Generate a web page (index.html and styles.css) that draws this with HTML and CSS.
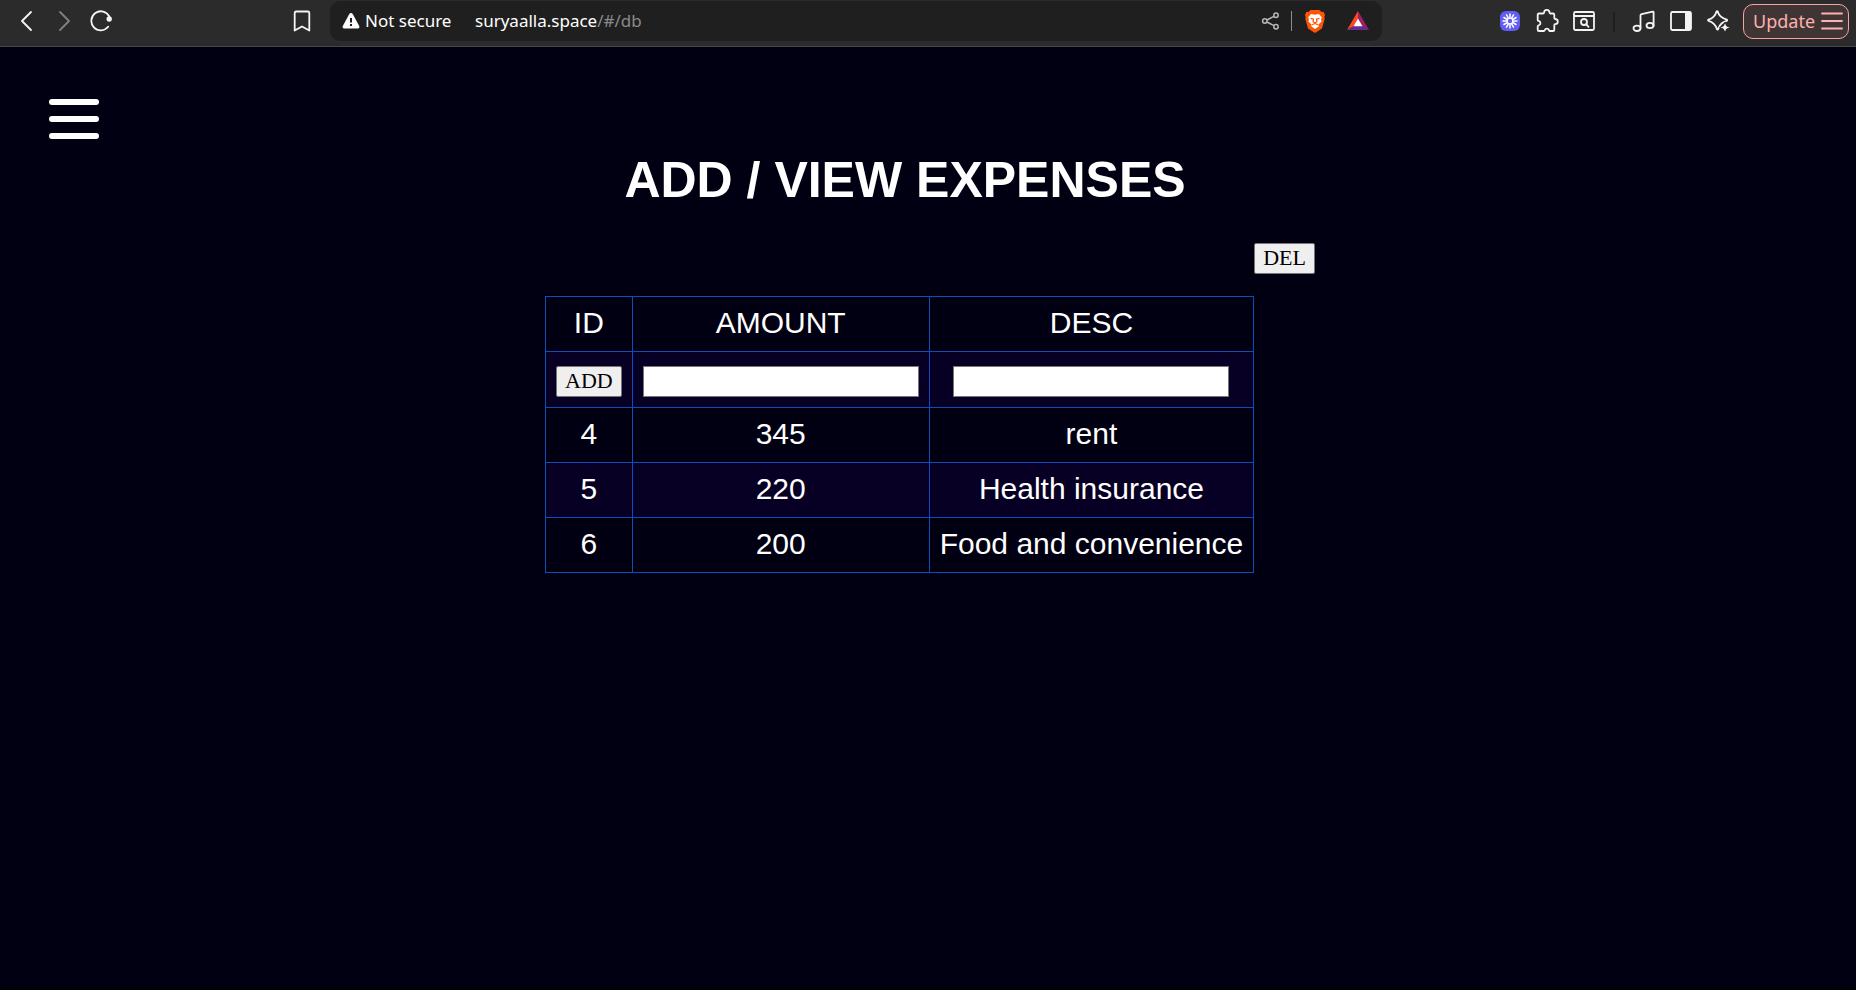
FILE: index.html
```html
<!DOCTYPE html>
<html lang="en">
<head>
<meta charset="utf-8">
<title>Expenses</title>
<link rel="stylesheet" href="styles.css">
</head>
<body>
<header class="toolbar">
  <nav class="nav">
    <button class="icon-btn" aria-label="Back"><svg width="22" height="22" viewBox="0 0 22 22"><path d="M15 2 6 11 15 20" class="line"/></svg></button>
    <button class="icon-btn dim" aria-label="Forward"><svg width="22" height="22" viewBox="0 0 22 22"><path d="M7 2l9 9-9 9" class="line"/></svg></button>
    <button class="icon-btn" aria-label="Reload"><svg width="22" height="22" viewBox="0 0 22 22"><path d="M18.200 16.800A9.500 9.500 0 1 1 19.300 6.500" class="line"/><circle cx="19.200" cy="9" r="2.700" fill="currentColor"/></svg></button>
  </nav>
  <button class="icon-btn bookmark" aria-label="Bookmark"><svg width="22" height="22" viewBox="0 0 22 22"><path d="M5.200 1.500h11.600a1.500 1.500 0 0 1 1.500 1.500v17.500L11 16.500l-7.300 4V3a1.500 1.500 0 0 1 1.500-1.500z" class="line"/></svg></button>
  <div class="address">
    <svg width="18" height="16" viewBox="0 0 18 16"><path d="M9 0c.8 0 1.300.4 1.700 1l6.500 12c.7 1.300-.1 2.500-1.400 2.500H2.200C.9 15.500.1 14.300.8 13L7.300 1C7.700.4 8.200 0 9 0z" fill="#fff"/><path d="M8 5h2v4.500H8zM8 11h2v2H8z" fill="#1f1f1f"/></svg>
    <span class="secure">Not secure</span>
    <span class="url">suryaalla.space<span class="path">/#/db</span></span>
    <div class="address-icons">
      <button class="icon-btn share" aria-label="Share"><svg width="20" height="20" viewBox="0 0 20 20"><g fill="none" stroke="currentColor" stroke-width="1.500"><circle cx="3.800" cy="10" r="2.200"/><circle cx="15" cy="4.300" r="2.200"/><circle cx="15" cy="15.700" r="2.200"/><path d="M6 9l7-3.600M6 11l7 3.600"/></g></svg></button>
      <span class="sep"></span>
      <button class="icon-btn" aria-label="Shields"><svg width="22" height="24" viewBox="0 0 22 24"><path d="M6.500 1h9l2 2 2-.3L21 6l-.7 2.200.4 1.500-2.700 9.800L11 24l-7-4.500L1.300 9.700l.4-1.500L1 6l1.500-3.300 2 .3z" fill="#fb5607"/><path d="M7 5l4 .8L15 5l2.700 3.200-.7 2.600.6 1.700-3.400 3.200.7 1.500-3.900 2.700-3.900-2.700.7-1.500-3.400-3.200.6-1.700-.7-2.600z" fill="#fff"/><path d="M6.500 9.300l3 .8-.4 2.700L11 14l1.900-1.200-.4-2.700 3-.8M8 15.800l3-1.300 3 1.300" fill="none" stroke="#fb5607" stroke-width="1.200"/></svg></button>
      <button class="icon-btn" aria-label="Rewards"><svg width="24" height="22" viewBox="0 0 24 22"><path d="M12 1 1 20l7-4 4-7z" fill="#ff4724"/><path d="M12 1l11 19-7-4-4-7z" fill="#9e1f63"/><path d="M1 20h22l-7-4H8z" fill="#662d91"/><path d="M12 8.500 7.500 16.300h9z" fill="#fff"/></svg></button>
    </div>
  </div>
  <div class="tools">
    <button class="icon-btn" aria-label="Loom"><svg width="22" height="22" viewBox="0 0 22 22"><rect x="1" y="1" width="20" height="20" rx="6" fill="#625df5"/><g stroke="#fff" stroke-width="1.500" stroke-linecap="round"><path d="M11 4v14M4 11h14M7.500 4.900l7 12.200M14.500 4.900l-7 12.200M4.900 7.500l12.200 7M4.900 14.500l12.200-7"/></g><circle cx="11" cy="11" r="3.300" fill="#fff"/><circle cx="11" cy="11" r="2.200" fill="#625df5"/></svg></button>
    <button class="icon-btn" aria-label="Extensions"><svg width="24" height="24" viewBox="0 0 24 24"><path d="M4 4.500h4.200c.6 0 .9-.3.900-.9a2.700 2.700 0 0 1 5.400 0c0 .6.300.9.900.9h2.600a1.300 1.300 0 0 1 1.300 1.300v3.200c0 .6.300.9.900 1a2.600 2.600 0 0 1 0 5.200c-.6.100-.9.400-.9 1V20.700a1.300 1.300 0 0 1-1.300 1.300h-3c-.6 0-.8-.3-1-.9a2.200 2.200 0 0 0-4.200 0c-.2.600-.5.900-1 .9H4a1.300 1.300 0 0 1-1.300-1.300v-3.300c0-.6.300-.8.900-1a2.300 2.300 0 0 0 0-4.500c-.6-.2-.9-.5-.9-1V5.800A1.300 1.300 0 0 1 4 4.500z" class="line"/></svg></button>
    <button class="icon-btn" aria-label="Search tabs"><svg width="22" height="22" viewBox="0 0 22 22"><rect x="1" y="2" width="20" height="18" rx="1.500" class="line"/><path d="M1 6h20" class="line"/><circle cx="11" cy="12" r="3" class="line"/><path d="M13.300 14.300l2.200 2.500" class="line"/></svg></button>
    <span class="sep dark"></span>
    <button class="icon-btn" aria-label="Media"><svg width="24" height="24" viewBox="0 0 24 24"><path d="M8.500 19V6.500c0-.8.400-1.200 1.100-1.400l11-2.500c.7-.1 1 .2 1 .8v13.300" class="line"/><ellipse cx="5" cy="19.300" rx="3.500" ry="2.700" class="line"/><ellipse cx="18" cy="16.500" rx="3.500" ry="2.700" class="line"/></svg></button>
    <button class="icon-btn" aria-label="Sidebar"><svg width="22" height="22" viewBox="0 0 22 22"><rect x="1" y="2" width="20" height="18" rx="1.500" class="line"/><path d="M15 2h6v18h-6z" fill="currentColor"/></svg></button>
    <button class="icon-btn" aria-label="Leo"><svg width="24" height="24" viewBox="0 0 24 24"><path d="M20.800 10.700c.5.200.5.900 0 1.100-3.900 1.300-6.500 2.500-8.700 8.300-.2.700-1 .7-1.200 0C9.500 15.500 7 13 2.500 11.800c-.6-.2-.6-.9 0-1.100C7 9.400 9.300 7 10.500 2.600c.2-.7 1-.7 1.200 0C12.900 7 16 9.400 20.800 10.700z" class="line"/><path d="M19 13l1.600 3.900 3.900 1.600-3.900 1.600L19 24l-1.600-3.900-3.900-1.600 3.900-1.600z" fill="currentColor" stroke="#2b2b2b" stroke-width="1"/></svg></button>
    <button class="update">Update<svg width="22" height="20" viewBox="0 0 22 20"><path d="M1 2.500h20M1 10h20M1 17.500h20" class="line"/></svg></button>
  </div>
</header>
<main class="page">
  <button class="menu" aria-label="Menu"><span class="bar"></span><span class="bar"></span><span class="bar"></span></button>
  <form class="expenses">
    <h1 class="title">ADD / VIEW EXPENSES</h1>
    <button type="button" class="action del">DEL</button>
    <table class="table">
      <thead>
        <tr><th>ID</th><th>AMOUNT</th><th>DESC</th></tr>
      </thead>
      <tbody>
        <tr class="alt entry"><td><button type="button" class="action">ADD</button></td><td><input class="field" type="text" aria-label="Amount"></td><td><input class="field" type="text" aria-label="Description"></td></tr>
        <tr><td>4</td><td>345</td><td>rent</td></tr>
        <tr class="alt"><td>5</td><td>220</td><td>Health insurance</td></tr>
        <tr><td>6</td><td>200</td><td>Food and convenience</td></tr>
      </tbody>
    </table>
  </form>
</main>
</body>
</html>
```
FILE: styles.css
```css
* { box-sizing: border-box; }

body {
  display: flex;
  flex-direction: column;
  min-height: 100vh;
  margin: 0;
  background: #010012;
  color: #fff;
  font-family: "Liberation Sans", Arial, sans-serif;
}

button { cursor: pointer; }

/* Browser toolbar */
.toolbar {
  display: flex;
  align-items: flex-start;
  height: 47px;
  padding: 1px 7px 0 15px;
  border-bottom: 1px solid #474747;
  background: #2b2b2b;
  font-family: "Noto Sans", "Open Sans", sans-serif;
  font-size: 17px;
}

.line {
  fill: none;
  stroke: currentColor;
  stroke-width: 1.8;
  stroke-linecap: round;
  stroke-linejoin: round;
}

.icon-btn {
  display: grid;
  place-items: center;
  width: 24px;
  height: 40px;
  padding: 0;
  border: 0;
  background: none;
  color: #f4f4f4;
}

.icon-btn svg { display: block; }
.dim { color: #808080; }

.nav {
  display: flex;
  gap: 13px;
  margin-right: 177px;
}

.bookmark { margin-right: 16px; }

.address {
  display: flex;
  flex: 1;
  align-items: center;
  max-width: 1052px;
  height: 40px;
  padding: 0 12px;
  border-radius: 10px;
  background: #1f1f1f;
}

.secure,
.url { padding-bottom: 2px; }

.secure {
  width: 110px;
  margin-left: 5px;
}

.path { color: #8a8a8a; }

.address-icons {
  display: flex;
  align-items: center;
  gap: 19px;
  margin-left: auto;
}

.sep {
  width: 1px;
  height: 20px;
  margin: 0 -8px 0 -11px;
  background: #8c8c8c;
}

.share { color: #b8b8b8; }

.tools {
  display: flex;
  align-items: flex-start;
  gap: 13px;
  margin-left: auto;
}

.dark {
  width: 2px;
  margin: 11px 4px 0;
  background: #1d1d22;
}

.update {
  display: flex;
  align-items: center;
  justify-content: space-between;
  width: 106px;
  height: 35px;
  margin-top: 3px;
  padding: 0 5px 1px 9px;
  border: 1px solid #f9a3a3;
  border-radius: 10px;
  background: #403535;
  color: #ffb0b0;
  font: 18px "Noto Sans", "Open Sans", sans-serif;
}

/* Page */
.page {
  flex: 1;
  padding: 52px 49px 0;
  border-bottom: 2px solid #000;
}

.menu {
  display: flex;
  flex-direction: column;
  gap: 11px;
  padding: 0;
  border: 0;
  background: none;
}

.bar {
  width: 50px;
  height: 6px;
  border-radius: 3px;
  background: #fff;
}

.expenses {
  display: grid;
  grid-template-columns: auto auto;
  justify-content: center;
  padding: 12px 0 0 4px;
}

.title {
  grid-column: 1 / -1;
  justify-self: center;
  margin: 0 50px 34px 0;
  font-size: 50px;
  line-height: 58px;
}

.action {
  height: 31px;
  padding: 0 8px 1px;
  border: 1px solid #767676;
  border-radius: 2px;
  background: #efefef;
  color: #000;
  font: 22px "Liberation Serif", "Times New Roman", serif;
}

.del {
  grid-column: 2;
  margin-bottom: 22px;
}

.table {
  border-collapse: collapse;
  font-size: 30px;
  line-height: normal;
  text-align: center;
}

.table th,
.table td {
  padding: 9px 10px 11px;
  border: 1px solid #0a50b8;
  font-weight: 400;
}

.table .entry td { padding-bottom: 10px; }

.alt { background: #080024; }

.field {
  width: 276px;
  height: 31px;
  padding: 2px;
  border: 1px solid #767676;
  background: #fff;
  color: #000;
  font: 22px "Liberation Serif", "Times New Roman", serif;
}
```
